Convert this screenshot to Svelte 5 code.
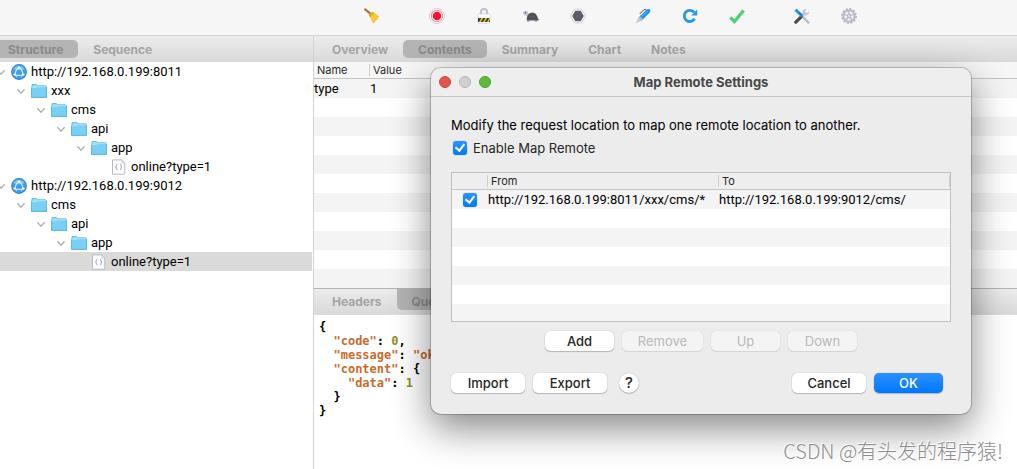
<script>
  const treeRows = [
    { depth: 0, type: "host", label: "http://192.168.0.199:8011" },
    { depth: 1, type: "folder", label: "xxx" },
    { depth: 2, type: "folder", label: "cms" },
    { depth: 3, type: "folder", label: "api" },
    { depth: 4, type: "folder", label: "app" },
    { depth: 5, type: "file", label: "online?type=1" },
    { depth: 0, type: "host", label: "http://192.168.0.199:9012" },
    { depth: 1, type: "folder", label: "cms" },
    { depth: 2, type: "folder", label: "api" },
    { depth: 3, type: "folder", label: "app" },
    { depth: 4, type: "file", label: "online?type=1" },
  ];

  const detailTabs = ["Overview", "Contents", "Summary", "Chart", "Notes"];
  const bodyTabs = ["Headers", "Query String"];

  let selectedRow = $state(10);
  let detailTab = $state("Contents");
  let bodyTab = $state("Query String");
  let enabled = $state(true);
  let mappings = $state([
    {
      active: true,
      from: "http://192.168.0.199:8011/xxx/cms/*",
      to: "http://192.168.0.199:9012/cms/",
    },
  ]);
</script>

<div class="window">
  <header class="toolbar">
    <div class="tool-group">
      <button class="tool" aria-label="Clear session">
        <svg viewBox="0 0 16 16">
          <path d="M1.2 1.4 6.4 5.6" stroke="#a9743a" stroke-width="2.2" stroke-linecap="round" />
          <path d="M5 7.2 8.6 3.8 15.4 8.4 14 9.8 13.6 11.6 11.6 12.4 10.8 14.2 9 15.2Z" fill="#f9c22e" />
          <path d="M5 7.2 8.6 3.8 10.2 4.9 5.9 9Z" fill="#e8a820" />
          <path d="M8 8.4 10.4 13.4M10 7.2 13 11" stroke="#ffdc62" stroke-width=".8" />
        </svg>
      </button>
    </div>
    <div class="tool-group">
      <button class="tool" aria-label="Record">
        <svg viewBox="0 0 16 16">
          <circle cx="8" cy="8" r="7.5" fill="#fff" stroke="#cdcfda" stroke-width="1" />
          <circle cx="8" cy="8" r="5.7" fill="#fff" stroke="#f58ba0" stroke-width="1.1" />
          <circle cx="8" cy="8" r="4.3" fill="#fb1239" />
        </svg>
      </button>
      <button class="tool" aria-label="SSL proxying">
        <svg viewBox="0 0 16 16">
          <path d="M5 7V4a3 3 0 0 1 6 0v3" fill="none" stroke="#c0c2d2" stroke-width="2.2" />
          <rect x="2" y="6" width="12" height="9.4" rx="1" fill="#fff" stroke="#cfd0db" stroke-width=".7" />
          <rect x="2" y="10" width="12" height="4" fill="#3b3d43" />
          <path d="M3 14 5.4 10h1.7l-2.4 4zM7 14l2.4-4h1.7l-2.4 4zM11 14l2.4-4h.6v1.5L12.6 14z" fill="#fbc52c" />
        </svg>
      </button>
      <button class="tool" aria-label="Throttling">
        <svg viewBox="0 0 16 16">
          <path d="M4 11h3.2l-.8 3H4.2zM11.4 11h3l-.4 3h-2z" fill="#b0b2c2" />
          <path d="M.2 5.2C.2 3.2 1.6 2.6 3 2.8s2.5 1.4 2.5 3.2l.8 3-1.8 1-1.2-2.6C1.4 7.4.2 6.6.2 5.2Z" fill="#c0c4d4" />
          <circle cx="2.3" cy="4.8" r=".7" fill="#424754" />
          <path d="M3.6 11.8C3.8 7.4 6 4.4 9.2 4.4s5.1 2.9 5.7 6l1.1 1.2-.8.8H4.2Z" fill="#575a61" />
          <path d="m5 9.8 2-3.6 2 1.6L11.4 6l2.4 3.6-2.6 1.2-2.2-1.2-2.2 1.4Z" fill="none" stroke="#34373c" stroke-width=".6" />
        </svg>
      </button>
      <button class="tool" aria-label="Breakpoints">
        <svg viewBox="0 0 16 16">
          <path d="M4.4 1.2h7.2L15.5 8l-3.9 6.8H4.4L.5 8Z" fill="#fff" stroke="#cbcdd8" stroke-width="1" />
          <path d="M5.2 2.8h5.6l3 5.2-3 5.2H5.2l-3-5.2Z" fill="#595d66" />
        </svg>
      </button>
    </div>
    <div class="tool-group">
      <button class="tool" aria-label="Compose">
        <svg viewBox="0 0 16 16">
          <path d="M.4 15.6 3.6 9.2 6.8 12.4Z" fill="#c6c9d7" />
          <path d="M3.2 9.6 5.8 7l3.4 3.4-3 2.7Z" fill="#b5b8c8" />
          <path d="m5 8.2 6.4-6.4c1-1 2.4-1.2 3.4-.4 1 1 .6 2.4-.3 3.4L8 11.2Z" fill="#2298ee" />
          <path d="M7 8 12.8 2.6" stroke="#4fb4f8" stroke-width=".9" />
          <path d="M4.8 5.8 8.8 1.8c.7-.5 1.6-.5 2.6.2" fill="none" stroke="#3d4047" stroke-width="1" />
        </svg>
      </button>
      <button class="tool" aria-label="Repeat">
        <svg viewBox="0 0 16 16">
          <path d="M12.6 10.8A5.6 5.6 0 1 1 12.2 4.4" fill="none" stroke="#1e98f3" stroke-width="2.8" />
          <path d="M15.2 1.4v6H9.3Z" fill="#1e98f3" />
        </svg>
      </button>
      <button class="tool" aria-label="Validate">
        <svg viewBox="0 0 16 16">
          <path d="m1.4 9.4 4 4.2 9.2-11.2" fill="none" stroke="#4bd07a" stroke-width="3.2" />
        </svg>
      </button>
    </div>
    <div class="tool-group">
      <button class="tool" aria-label="Tools">
        <svg viewBox="0 0 16 16">
          <path d="m8 8 6.4 6.6" stroke="#b9bccb" stroke-width="2.4" stroke-linecap="round" />
          <path d="M15.2 3.4 12.8 5 11 3.4 12.4.8A4 4 0 0 0 8.2 5.6l-1 1L9.4 9l1.4-1.4a4 4 0 0 0 4.4-4.2Z" fill="#c4c6d4" />
          <path d="M1.8 14.2 7.2 8.8" stroke="#474a52" stroke-width="3.2" stroke-linecap="round" />
          <path d="M.4 2.8 2.6.6 9.2 7.2 7.2 9.2Z" fill="#2299ef" />
          <path d="m5.2 4.4 2.6 2.8" stroke="#126cb6" stroke-width="1.2" />
        </svg>
      </button>
      <button class="tool" aria-label="Settings">
        <svg viewBox="0 0 16 16">
          <circle cx="8" cy="8" r="7" fill="none" stroke="#b6b8c7" stroke-width="1.8" stroke-dasharray="2.2 1.47" />
          <circle cx="8" cy="8" r="5.7" fill="#eceef4" stroke="#b6b8c7" stroke-width="1.8" />
          <path d="M8 8V3M8 8 3.2 6.4M8 8l4.8-1.6M8 8l-3 4M8 8l3 4" stroke="#b6b8c7" stroke-width="1.3" />
          <circle cx="8" cy="8" r="1.9" fill="#b6b8c7" />
          <circle cx="8" cy="8" r=".9" fill="#eceef4" />
        </svg>
      </button>
    </div>
  </header>

  <div class="panes">
    <aside class="sidebar">
      <nav class="tabs tabs--sidebar">
        <button class="tab tab--active">Structure</button>
        <button class="tab">Sequence</button>
      </nav>
      <ul class="tree">
        {#each treeRows as row, i}
          <li>
            <button
              class="tree-row"
              class:tree-row--selected={selectedRow === i}
              onclick={() => (selectedRow = i)}
            >
              <span class="indent" style="margin-left: {row.depth * 20 - 5}px">
                {#if row.type !== "file"}
                  <svg class="chevron" viewBox="0 0 12 12">
                    <path d="m2.4 4.2 3.6 4 3.6-4" fill="none" stroke="#b0b0b0" stroke-width="1.3" />
                  </svg>
                {/if}
              </span>
              {#if row.type === "host"}
                <svg class="tree-icon" viewBox="0 0 16 16">
                  <circle cx="8" cy="8" r="7.9" fill="#2c7fd6" />
                  <circle cx="8" cy="7.8" r="7" fill="#3f9fee" />
                  <path d="M2.4 5.2A6.4 6.4 0 0 1 13.6 5.2C10 6.6 6 6.6 2.4 5.2Z" fill="#7cc6f8" />
                  <path d="M8 3.4C5.6 5 4.4 7.6 4 10.6M8 3.4c2.4 1.6 3.6 4.2 4 7.2M2.2 10.4c3.8 1.2 7.8 1.2 11.6 0" fill="none" stroke="#e6f5ff" stroke-width="1.1" />
                  <path d="M6 11.4l-.8 2M10 11.4l.8 2" stroke="#bfe3fb" stroke-width=".8" />
                  <circle cx="8" cy="3.6" r="1.2" fill="#fff" />
                  <circle cx="4" cy="10.6" r="1.1" fill="#fff" />
                  <circle cx="12" cy="10.6" r="1.1" fill="#fff" />
                </svg>
              {:else if row.type === "folder"}
                <svg class="tree-icon" viewBox="0 0 16 16">
                  <path d="M1 4V1.6h4.6l1.2 1.2h8V5H1Z" fill="#9be0f8" stroke="#4fb2d8" stroke-width=".8" />
                  <path d="M.4 4.6h5.4l1-.9h8.8v10.7H.4Z" fill="#79d0f6" />
                  <path d="M.4 4.6h5.4l1-.9h8.8" fill="none" stroke="#b5e9fb" stroke-width=".8" />
                  <path d="M.4 4.6v9.8h15.2V3.7" fill="none" stroke="#43a9d2" stroke-width=".8" />
                </svg>
              {:else}
                <svg class="tree-icon" viewBox="0 0 16 16">
                  <path d="M1.5 .9h9.4l2.9 2.9v11.4H1.5Z" fill="#fbfbfd" stroke="#b9bac6" stroke-width="1" />
                  <path d="M10.8 1v3h3" fill="#e6e7ee" stroke="#c4c5d0" stroke-width=".7" />
                  <path d="M6.4 5.4c-1 0-1 .5-1 1.2s0 1.1-.9 1.4c.9.3.9.7.9 1.4s0 1.2 1 1.2M9 5.4c1 0 1 .5 1 1.2s0 1.1.9 1.4c-.9.3-.9.7-.9 1.4s0 1.2-1 1.2" fill="none" stroke="#85879a" stroke-width=".8" />
                </svg>
              {/if}
              <span>{row.label}</span>
            </button>
          </li>
        {/each}
      </ul>
    </aside>

    <main class="detail">
      <nav class="tabs">
        {#each detailTabs as tab}
          <button class="tab" class:tab--active={detailTab === tab} onclick={() => (detailTab = tab)}>
            {tab}
          </button>
        {/each}
      </nav>
      <div class="striped contents">
        <table class="grid">
          <colgroup>
            <col class="col-name" />
            <col />
          </colgroup>
          <thead>
            <tr><th>Name</th><th>Value</th></tr>
          </thead>
          <tbody>
            <tr><td>type</td><td>1</td></tr>
          </tbody>
        </table>
      </div>
      <nav class="tabs tabs--body">
        {#each bodyTabs as tab}
          <button class="tab" class:tab--active={bodyTab === tab} onclick={() => (bodyTab = tab)}>
            {tab}
          </button>
        {/each}
      </nav>
      <pre class="json">{"{"}
  <i>"code"</i>: <b>0</b>,
  <i>"message"</i>: <i>"ok"</i>,
  <i>"content"</i>: {"{"}
    <i>"data"</i>: <b>1</b>
  {"}"}
{"}"}</pre>
    </main>
  </div>

  <div class="dialog" role="dialog" aria-labelledby="dialog-title">
    <div class="titlebar">
      <div class="lights">
        <button class="light light--close" aria-label="Close"></button>
        <button class="light" aria-label="Minimize" disabled></button>
        <button class="light light--zoom" aria-label="Zoom"></button>
      </div>
      <h1 id="dialog-title">Map Remote Settings</h1>
    </div>
    <div class="dialog-body">
      <p>Modify the request location to map one remote location to another.</p>
      <label class="enable">
        <input type="checkbox" bind:checked={enabled} />
        Enable Map Remote
      </label>
      <div class="striped mappings">
        <table class="grid">
          <colgroup>
            <col class="col-check" />
            <col class="col-from" />
            <col />
          </colgroup>
          <thead>
            <tr><th aria-label="Active"></th><th>From</th><th>To</th></tr>
          </thead>
          <tbody>
            {#each mappings as mapping}
              <tr>
                <td class="check-cell">
                  <input type="checkbox" aria-label="Use mapping" bind:checked={mapping.active} />
                </td>
                <td>{mapping.from}</td>
                <td>{mapping.to}</td>
              </tr>
            {/each}
          </tbody>
        </table>
      </div>
      <div class="row-actions">
        <button class="btn">Add</button>
        <button class="btn btn--wide" disabled>Remove</button>
        <button class="btn" disabled>Up</button>
        <button class="btn" disabled>Down</button>
      </div>
      <div class="dialog-actions">
        <button class="btn btn--medium">Import</button>
        <button class="btn btn--medium">Export</button>
        <button class="help" aria-label="Help">?</button>
        <span class="spacer"></span>
        <button class="btn btn--medium">Cancel</button>
        <button class="btn btn--primary">OK</button>
      </div>
    </div>
  </div>

  <div class="watermark">CSDN @有头发的程序猿!</div>
</div>

<style>
  :global(body) {
    margin: 0;
    background: #fff;
  }

  .window {
    position: relative;
    display: flex;
    flex-direction: column;
    min-height: 100vh;
    overflow: hidden;
    font-family: Inter, "Liberation Sans", sans-serif;
    font-size: 12px;
    color: #000;
  }

  button {
    margin: 0;
    padding: 0;
    border: 0;
    background: none;
    font: inherit;
    color: inherit;
  }

  /* Toolbar */
  .toolbar {
    display: flex;
    justify-content: center;
    gap: 49px;
    height: 35px;
    padding-left: 204px;
    border-bottom: 1px solid #d4d4d4;
    background: #f6f6f6;
  }

  .tool-group {
    display: flex;
    gap: 31px;
    padding-top: 8px;
  }

  .tool {
    width: 16px;
    height: 16px;
  }

  .tool svg {
    display: block;
    width: 16px;
    height: 16px;
    fill: none;
  }

  /* Panes and tabs */
  .panes {
    display: flex;
    flex: 1;
  }

  .sidebar {
    flex: 0 0 313px;
    border-right: 1px solid #d2d2d2;
  }

  .detail {
    display: flex;
    flex: 1;
    flex-direction: column;
    min-width: 0;
  }

  .tabs {
    display: flex;
    align-items: center;
    box-sizing: border-box;
    height: 26px;
    padding-left: 3px;
    background: linear-gradient(#ececec, #d9d9d9);
  }

  .tabs--sidebar {
    padding-left: 0;
  }

  .tab {
    height: 18px;
    padding: 0 15px;
    border-radius: 5px;
    font-size: 12px;
    font-weight: 700;
    line-height: 19px;
    color: #a4a4a4;
  }

  .tabs--sidebar .tab:first-child {
    padding-left: 8px;
    border-radius: 0 5px 5px 0;
  }

  .tab--active {
    background: #b4b4b4;
    color: #8a8a8a;
  }

  .tabs--body {
    border-top: 1px solid #b4b4b4;
    border-bottom: 1px solid #dcdcdc;
    height: 27px;
    align-items: flex-start;
  }

  .tabs--body .tab {
    height: 21px;
    line-height: 25px;
    border-radius: 0 0 5px 5px;
  }

  /* Site tree */
  .tree {
    margin: 0;
    padding: 0;
    list-style: none;
  }

  .tree-row {
    display: flex;
    align-items: center;
    gap: 4px;
    width: 312px;
    height: 19px;
    font-family: Roboto, "Liberation Sans", sans-serif;
    font-size: 13px;
    line-height: 19px;
    white-space: nowrap;
    overflow: hidden;
  }

  .tree-row--selected {
    background: #dadada;
  }

  .indent {
    flex: none;
    width: 12px;
    height: 12px;
  }

  .chevron {
    display: block;
    width: 12px;
    height: 12px;
  }

  .tree-icon {
    flex: none;
    width: 16px;
    height: 16px;
  }

  /* Striped tables */
  .striped {
    background: repeating-linear-gradient(#f4f4f4 0 19px, #fff 19px 38px) 0 17px;
  }

  .contents {
    height: 226px;
  }

  .grid {
    width: 100%;
    table-layout: fixed;
    border-collapse: separate;
    border-spacing: 0;
  }

  .col-name {
    width: 56px;
  }

  .col-check {
    width: 36px;
  }

  .col-from {
    width: 231px;
  }

  .grid th {
    box-sizing: border-box;
    height: 17px;
    padding: 0 0 0 3px;
    border-bottom: 1px solid #c4c4c4;
    background: linear-gradient(#d0d0d0, #d0d0d0) right center / 1px 12px no-repeat #f6f6f6;
    font-size: 11px;
    font-weight: 400;
    line-height: 16px;
    text-align: left;
    color: #262626;
  }

  .contents th:last-child {
    background: #f6f6f6;
  }

  .grid td {
    height: 19px;
    padding: 0;
    font-family: Roboto, "Liberation Sans", sans-serif;
    font-size: 13px;
    line-height: 19px;
    white-space: nowrap;
  }

  .json {
    flex: 1;
    margin: 0;
    padding: 5px 5px 0;
    font-family: "DejaVu Sans Mono", monospace;
    font-size: 12px;
    font-weight: 700;
    line-height: 14px;
  }

  .json i {
    font-style: normal;
    color: #cb6a2c;
  }

  .json b {
    color: #8f9126;
  }

  /* Map Remote dialog */
  .dialog {
    position: absolute;
    top: 68px;
    left: 431px;
    width: 540px;
    border-radius: 10px;
    background: #ececec;
    box-shadow:
      0 0 0 1px rgba(0, 0, 0, 0.2),
      0 14px 38px rgba(0, 0, 0, 0.48);
  }

  .titlebar {
    display: grid;
    grid-template-columns: 1fr auto 1fr;
    align-items: center;
    height: 28px;
    padding: 0 8px;
    border-bottom: 1px solid #c6c6c6;
    border-radius: 10px 10px 0 0;
    background: #eee;
  }

  .titlebar h1 {
    margin: 0;
    font-size: 13px;
    font-weight: 700;
    color: #484848;
  }

  .lights {
    display: flex;
    gap: 8px;
  }

  .light {
    box-sizing: border-box;
    width: 12px;
    height: 12px;
    border: 1px solid #b6b6b6;
    border-radius: 50%;
    background: #d0d0d0;
  }

  .light--close {
    border-color: #c9473d;
    background: #e2554b;
  }

  .light--zoom {
    border-color: #4ca02c;
    background: #62ba3c;
  }

  .dialog-body {
    padding: 20px 20px 21px;
    font-size: 13px;
  }

  .dialog-body p {
    margin: 0;
    line-height: 16px;
    white-space: nowrap;
  }

  .enable {
    display: flex;
    align-items: center;
    gap: 6px;
    height: 16px;
    margin: 7px 0 16px;
    padding-left: 2px;
    color: #262626;
  }

  input[type="checkbox"] {
    appearance: none;
    position: relative;
    flex: none;
    width: 14px;
    height: 14px;
    margin: 0;
    border-radius: 3px;
    background: #fff;
    box-shadow: 0 0 1px rgba(0, 0, 0, 0.5);
  }

  input[type="checkbox"]:checked {
    background: linear-gradient(#2f93ff, #007aff);
  }

  input[type="checkbox"]:checked::after {
    content: "";
    position: absolute;
    top: 1px;
    left: 4px;
    width: 4px;
    height: 7px;
    border: solid #fff;
    border-width: 0 2px 2px 0;
    transform: rotate(38deg);
  }

  .mappings {
    height: 150px;
    border: 1px solid #c0c0c0;
    box-sizing: border-box;
  }

  .mappings th {
    background-color: #eee;
  }

  .check-cell input {
    display: block;
    margin: 0 auto;
  }

  .row-actions {
    display: flex;
    justify-content: center;
    gap: 8px;
    margin: 9px 0 21px;
  }

  .dialog-actions {
    display: flex;
    align-items: center;
    gap: 8px;
    height: 21px;
    padding-right: 8px;
  }

  .spacer {
    flex: 1;
  }

  .btn {
    width: 69px;
    height: 20px;
    border-radius: 5px;
    background: #fff;
    box-shadow:
      0 0 1px rgba(0, 0, 0, 0.35),
      0 1px 1px rgba(0, 0, 0, 0.2);
    font-size: 13px;
    font-weight: 500;
    line-height: 20px;
    color: #262626;
  }

  .btn:disabled {
    background: #f4f4f4;
    box-shadow:
      0 0 1px rgba(0, 0, 0, 0.2),
      0 1px 1px rgba(0, 0, 0, 0.08);
    font-weight: 400;
    color: #b9b9b9;
  }

  .btn--medium {
    width: 74px;
  }

  .btn--wide {
    width: 81px;
  }

  .btn--primary {
    background: linear-gradient(#2a90ff, #0078ff);
    color: #fff;
  }

  .help {
    width: 20px;
    height: 20px;
    margin-left: 4px;
    border-radius: 50%;
    background: #fff;
    box-shadow:
      0 0 1px rgba(0, 0, 0, 0.35),
      0 1px 1px rgba(0, 0, 0, 0.2);
    font-size: 15px;
    font-weight: 500;
    line-height: 20px;
    color: #262626;
  }

  .watermark {
    position: absolute;
    right: 14px;
    bottom: 6px;
    font-family: "Noto Sans CJK SC", sans-serif;
    font-size: 20px;
    line-height: 24px;
    font-weight: 300;
    color: #8e8e8e;
    text-shadow: -1px -1px 0 #fff;
  }
</style>
